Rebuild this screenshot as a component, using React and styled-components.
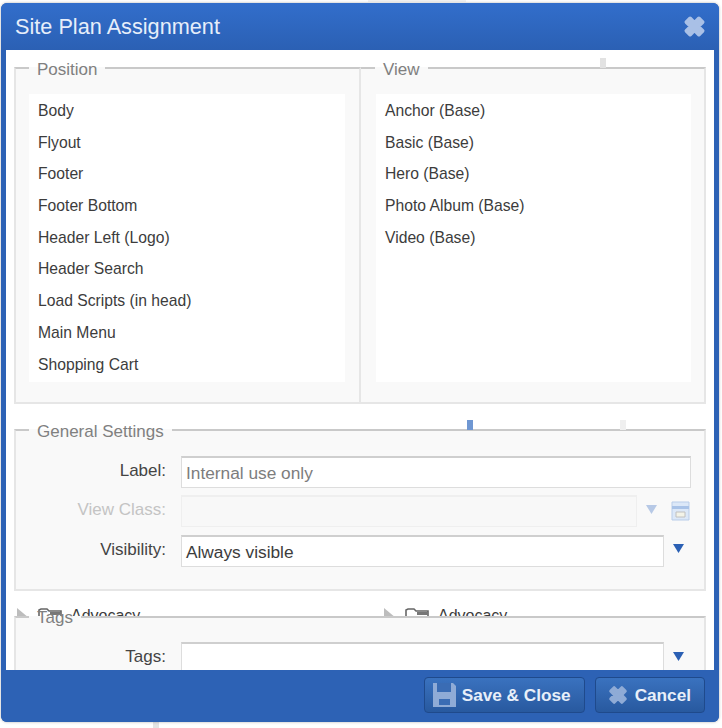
import React from 'react';
import styled, { createGlobalStyle } from 'styled-components';

const GlobalStyle = createGlobalStyle`
  html, body {
    margin: 0;
    padding: 0;
    background: #fff;
  }
  body {
    font-family: "Liberation Sans", Arial, sans-serif;
    color: #333;
  }
`;

const Page = styled.div`
  position: relative;
  width: 722px;
  height: 728px;
  padding: 3px 3px 6px 1px;
  box-sizing: border-box;
  overflow: hidden;
`;

const Modal = styled.div`
  position: relative;
  height: 100%;
  display: flex;
  flex-direction: column;
  border-radius: 6px;
  background: #2d62b5;
  box-shadow: 0 0 3px rgba(0, 0, 0, 0.3);
  overflow: hidden;
`;

const Header = styled.div`
  height: 47px;
  flex: none;
  display: flex;
  align-items: center;
  justify-content: space-between;
  padding: 0 12px 0 14px;
  background: linear-gradient(#326ecb, #2b60b4);
`;

const Title = styled.div`
  color: #e6eefa;
  font-size: 21.7px;
`;

const Body = styled.div`
  flex: 1;
  min-height: 0;
  margin: 0 5px;
  padding: 8px 8px 0;
  background: #fff;
  overflow: hidden;
`;

const Columns = styled.div`
  display: grid;
  grid-template-columns: 347px 345px;
`;

const Group = styled.fieldset`
  position: relative;
  margin: ${(p) => p.$mt || 0}px 0 0;
  padding: ${(p) => p.$pt ?? 16}px ${(p) => (p.$joined ? 13 : 14)}px ${(p) => p.$pb ?? 20}px ${(p) => (p.$joined ? 15 : 13)}px;
  min-width: 0;
  background: #f9f9f9;
  border: 2px solid #e6e6e6;
  border-top-color: #c9c9c9;
  border-left-width: ${(p) => (p.$joined ? 0 : 2)}px;
  box-sizing: border-box;
`;

const Legend = styled.legend`
  margin-left: ${(p) => (p.$joined ? -1 : 0)}px;
  padding: 0 8px;
  height: 20px;
  line-height: ${(p) => p.$lh || 24}px;
  font-size: 17px;
  color: #808080;
`;

const List = styled.div`
  height: 288px;
  background: #fff;
`;

const ListItem = styled.div`
  height: 31.7px;
  line-height: 33px;
  padding-left: 9px;
  font-size: 15.7px;
  color: #3c3c3c;
`;

const FormRow = styled.div`
  display: flex;
  align-items: center;
  height: 39.5px;
`;

const FieldLabel = styled.label`
  width: 152px;
  flex: none;
  text-align: right;
  padding-right: 15px;
  box-sizing: border-box;
  margin-top: -2px;
  font-size: 17px;
  color: ${(p) => (p.$off ? '#c4c4c4' : '#444')};
`;

const Field = styled.div`
  width: ${(p) => p.$w}px;
  height: 32px;
  flex: none;
  box-sizing: border-box;
  padding: 0 4px;
  line-height: 30px;
  font-size: 17.3px;
  color: ${(p) => p.$color || '#3c3c3c'};
  background: ${(p) => (p.$off ? '#f8f8f8' : '#fff')};
  border: 1px solid ${(p) => (p.$off ? '#efefef' : '#dddddd')};
  border-top: 2px solid ${(p) => (p.$off ? '#efefef' : '#cfcfcf')};
`;

const Caret = styled.svg`
  flex: none;
  width: 11px;
  height: 9px;
  margin-left: 9px;
  margin-top: -4px;
  fill: ${(p) => (p.$off ? '#b7c9e6' : '#2b60b4')};
`;

const ClassIcon = styled.svg`
  flex: none;
  width: 19px;
  height: 20px;
  margin-left: 14px;
`;

const TreeStrip = styled.div`
  display: grid;
  grid-template-columns: 347px 345px;
  height: 25px;
  margin-bottom: -9px;
  padding-top: 17px;
  box-sizing: border-box;
`;

const TreeRow = styled.div`
  display: flex;
  align-items: flex-start;
  padding-left: ${(p) => p.$pl}px;
  font-size: 16px;
  line-height: 16px;
  color: #3c3c3c;
`;

const TreeFolder = styled.svg`
  width: 24px;
  height: 14px;
  margin: 0 9px 0 9px;
  flex: none;
`;

const TreeArrow = styled.svg`
  width: 12px;
  height: 10px;
  flex: none;
  fill: #bdbdbd;
`;

const Footer = styled.div`
  height: 52px;
  flex: none;
  display: flex;
  justify-content: flex-end;
  align-items: flex-start;
  gap: 10px;
  padding: 7px 14px 0 0;
  box-sizing: border-box;
  background: #2d62b5;
`;

const FootButton = styled.button`
  height: 36px;
  display: flex;
  align-items: center;
  gap: 6px;
  padding: 0 13px 0 ${(p) => p.$pl}px;
  border: 1px solid #1f4a8c;
  border-radius: 4px;
  background: linear-gradient(#3a72bf, #28599f);
  font-family: "Liberation Sans", Arial, sans-serif;
  font-size: 17.2px;
  font-weight: bold;
  color: #e8eff9;
`;

const Speck = styled.div`
  position: absolute;
  left: ${(p) => p.$x}px;
  top: ${(p) => p.$y}px;
  width: ${(p) => p.$w || 6}px;
  height: ${(p) => p.$h || 10}px;
  background: ${(p) => p.$c};
`;

const CloseIcon = ({ size, color }) => (
  <svg width={size} height={size} viewBox="0 0 20 20">
    <path
      d="M3.5 6.5l3-3 3.5 3.5 3.5-3.5 3 3-3.5 3.5 3.5 3.5-3 3-3.5-3.5-3.5 3.5-3-3 3.5-3.5z"
      fill={color}
      stroke={color}
      strokeWidth="3"
      strokeLinejoin="round"
    />
  </svg>
);

const SaveIcon = () => (
  <svg width="23" height="24" viewBox="0 0 23 24">
    <path d="M0 0h20l3 3v21H0z" fill="#8fabd6" />
    <path d="M4 0h14v9H4z" fill="#3a6cb4" />
    <path d="M6 16h11v6H6z" fill="#3a6cb4" />
  </svg>
);

const positions = [
  'Body',
  'Flyout',
  'Footer',
  'Footer Bottom',
  'Header Left (Logo)',
  'Header Search',
  'Load Scripts (in head)',
  'Main Menu',
  'Shopping Cart',
];

const views = ['Anchor (Base)', 'Basic (Base)', 'Hero (Base)', 'Photo Album (Base)', 'Video (Base)'];

const Down = ({ off }) => (
  <Caret viewBox="0 0 11 9" $off={off}>
    <path d="M0 0h11L5.5 9z" />
  </Caret>
);

const Folder = () => (
  <TreeFolder viewBox="0 0 24 14">
    <path d="M1 14V2l2-1h6l2 2h12v11" fill="#fff" stroke="#666" strokeWidth="1.6" />
    <path d="M12 4h11v3H12z" fill="#777" />
  </TreeFolder>
);

const Tree = ({ pl }) => (
  <TreeRow $pl={pl}>
    <TreeArrow viewBox="0 0 12 10">
      <path d="M0 0l12 10H0z" />
    </TreeArrow>
    <Folder />
    Advocacy
  </TreeRow>
);

export default function App() {
  return (
    <>
      <GlobalStyle />
      <Page>
        <Speck $x={153} $y={718} $c="#e4e4e4" />
        <Speck $x={368} $y={0} $w={98} $h={2} $c="#f2f2f2" />
        <Modal>
          <Header>
            <Title>Site Plan Assignment</Title>
            <CloseIcon size={25} color="#a9c0e6" />
          </Header>
          <Body>
            <Columns>
              <Group>
                <Legend>Position</Legend>
                <List>
                  {positions.map((name) => (
                    <ListItem key={name}>{name}</ListItem>
                  ))}
                </List>
              </Group>
              <Group $joined>
                <Legend $joined>View</Legend>
                <List>
                  {views.map((name) => (
                    <ListItem key={name}>{name}</ListItem>
                  ))}
                </List>
              </Group>
            </Columns>
            <Group $mt={16} $pt={12} $pb={18}>
              <Legend>General Settings</Legend>
              <FormRow>
                <FieldLabel>Label:</FieldLabel>
                <Field $w={510} $color="#7d7d7d">Internal use only</Field>
              </FormRow>
              <FormRow>
                <FieldLabel $off>View Class:</FieldLabel>
                <Field $w={456} $off />
                <Down off />
                <ClassIcon viewBox="0 0 19 20">
                  <path d="M1 1h17v18H1z" fill="#dce8f8" stroke="#b9cde9" />
                  <path d="M1 5h17v3H1z" fill="#a9c3e8" />
                  <path d="M5 11h9v5H5z" fill="#f3f3e8" stroke="#c0c0c0" />
                </ClassIcon>
              </FormRow>
              <FormRow>
                <FieldLabel>Visibility:</FieldLabel>
                <Field $w={483}>Always visible</Field>
                <Down />
              </FormRow>
            </Group>
            <TreeStrip>
              <Tree pl={3} />
              <Tree pl={23} />
            </TreeStrip>
            <Group $pt={12}>
              <Legend $lh={22}>Tags</Legend>
              <FormRow>
                <FieldLabel>Tags:</FieldLabel>
                <Field $w={483} />
                <Down />
              </FormRow>
            </Group>
          </Body>
          <Footer>
            <FootButton $pl={8}>
              <SaveIcon />
              Save &amp; Close
            </FootButton>
            <FootButton $pl={11}>
              <CloseIcon size={22} color="#8fabd6" />
              Cancel
            </FootButton>
          </Footer>
          <Speck $x={599} $y={55} $c="#e2e2e2" />
          <Speck $x={466} $y={417} $c="#6f97d2" />
          <Speck $x={619} $y={417} $c="#efefef" />
        </Modal>
      </Page>
    </>
  );
}
